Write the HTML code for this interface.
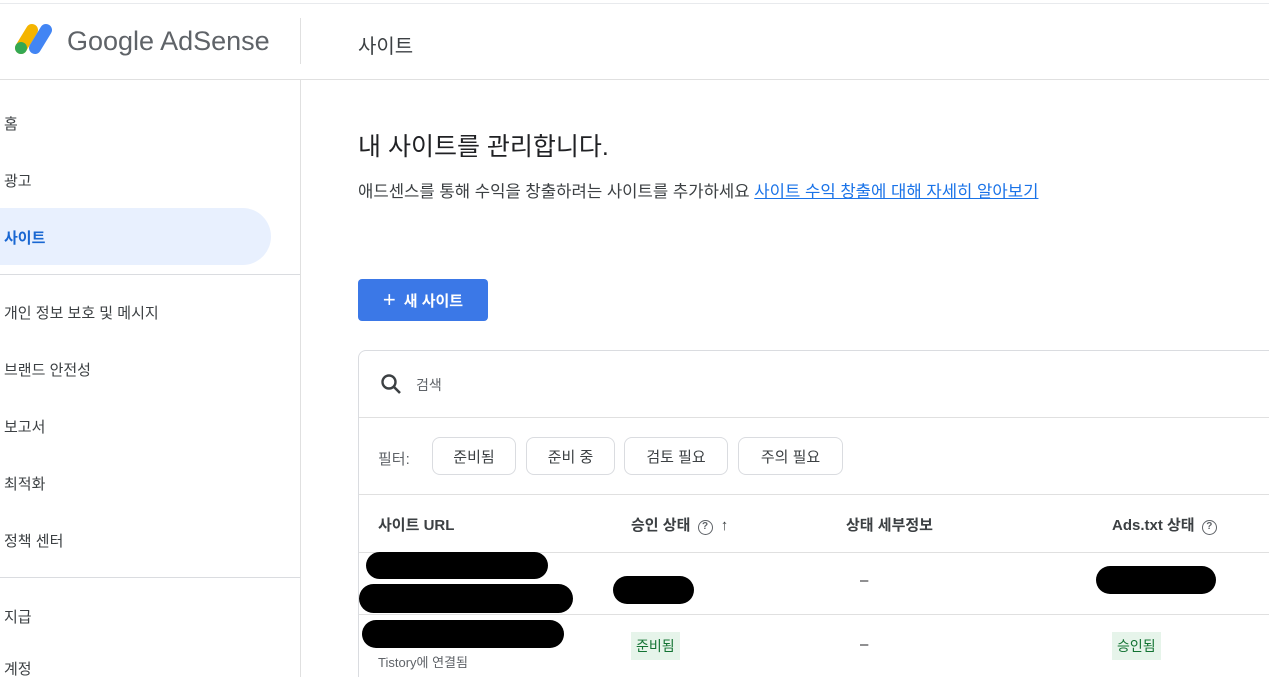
<!DOCTYPE html>
<html style="width:1269px;height:677px;overflow:hidden"><head><meta charset="utf-8"><style>
*{box-sizing:border-box;margin:0;padding:0}
body{width:1269px;height:677px;overflow:hidden;background:#fff;font-family:"Liberation Sans","Noto Sans CJK KR",sans-serif;color:#202124;position:relative}
.a{position:absolute;white-space:nowrap}
.nav{font-size:15px;color:#3c4043;left:4px}
.hl{left:0;top:208px;width:271px;height:57px;background:#e8f0fe;border-radius:0 29px 29px 0}
.chip{position:absolute;top:437px;height:38px;border:1px solid #dadce0;border-radius:8px;font-size:15px;color:#3c4043;display:flex;align-items:center;justify-content:center}
.th{font-size:15px;color:#3c4043;font-weight:bold;top:514px}
.blob{position:absolute;background:#000;border-radius:20px}
.tag{position:absolute;background:#e6f4ea;color:#137333;font-size:14px;padding:4px 5px}
.q{display:inline-block;width:15px;height:15px;border:1.5px solid #5f6368;border-radius:50%;font-size:10px;line-height:12px;text-align:center;font-weight:bold;color:#5f6368;vertical-align:1px;margin-left:3px}
</style></head><body>
<div class="a" style="left:0;top:3px;width:1269px;height:1px;background:#e8eaed"></div>
<svg class="a" style="left:12px;top:22px" width="42" height="34" viewBox="0 0 42 34">
<line x1="20" y1="8" x2="9" y2="26" stroke="#f4b400" stroke-width="12" stroke-linecap="round"/>
<line x1="34" y1="8" x2="23" y2="26" stroke="#4285f4" stroke-width="12" stroke-linecap="round"/>
<circle cx="9" cy="26" r="6" fill="#34a853"/></svg>
<div class="a" style="left:67px;top:26px;font-size:27px;color:#5f6368">Google AdSense</div>
<div class="a" style="left:300px;top:18px;width:1px;height:46px;background:#e0e0e0"></div>
<div class="a" style="left:358px;top:30px;font-size:20px;color:#3c4043">사이트</div>
<div class="a" style="left:0;top:79px;width:1269px;height:1px;background:#e0e0e0"></div>
<div class="a" style="left:300px;top:80px;width:1px;height:597px;background:#e0e0e0"></div>
<div class="a hl"></div>
<div class="a nav" style="top:113px">홈</div>
<div class="a nav" style="top:170px">광고</div>
<div class="a nav" style="top:227px;color:#1967d2;font-weight:bold">사이트</div>
<div class="a" style="left:0;top:274px;width:300px;height:1px;background:#dadce0"></div>
<div class="a nav" style="top:302px">개인 정보 보호 및 메시지</div>
<div class="a nav" style="top:359px">브랜드 안전성</div>
<div class="a nav" style="top:416px">보고서</div>
<div class="a nav" style="top:473px">최적화</div>
<div class="a nav" style="top:530px">정책 센터</div>
<div class="a" style="left:0;top:577px;width:300px;height:1px;background:#dadce0"></div>
<div class="a nav" style="top:606px">지급</div>
<div class="a nav" style="top:658px">계정</div>

<div class="a" style="left:358px;top:127px;font-size:25px;color:#202124">내 사이트를 관리합니다.</div>
<div class="a" style="left:358px;top:178px;font-size:16.7px;color:#3c4043">애드센스를 통해 수익을 창출하려는 사이트를 추가하세요 <span style="color:#1a73e8;text-decoration:underline">사이트 수익 창출에 대해 자세히 알아보기</span></div>
<div class="a" style="left:358px;top:279px;width:130px;height:42px;background:#3b78e7;border-radius:4px;color:#fff;font-size:15px;font-weight:bold;display:flex;align-items:center;justify-content:center"><span style="font-size:22px;font-weight:normal;margin-right:8px">+</span>새 사이트</div>

<div class="a" style="left:358px;top:350px;width:911px;height:327px;border:1px solid #dadce0;border-bottom:none;border-right:none;border-radius:8px 0 0 0"></div>
<svg class="a" style="left:380px;top:373px" width="22" height="22" viewBox="0 0 22 22"><circle cx="9" cy="9" r="6.5" fill="none" stroke="#3c4043" stroke-width="2.4"/><line x1="14" y1="14" x2="20" y2="20" stroke="#3c4043" stroke-width="2.6"/></svg>
<div class="a" style="left:416px;top:375px;font-size:14px;color:#5f6368">검색</div>
<div class="a" style="left:359px;top:417px;width:910px;height:1px;background:#e0e0e0"></div>
<div class="a" style="left:378px;top:448px;font-size:15px;color:#5f6368">필터:</div>
<div class="chip" style="left:432px;width:84px">준비됨</div>
<div class="chip" style="left:526px;width:89px">준비 중</div>
<div class="chip" style="left:624px;width:104px">검토 필요</div>
<div class="chip" style="left:738px;width:105px">주의 필요</div>
<div class="a" style="left:359px;top:494px;width:910px;height:1px;background:#e0e0e0"></div>
<div class="a th" style="left:378px">사이트 URL</div>
<div class="a th" style="left:631px">승인 상태 <span class="q">?</span> <span style="font-weight:normal;margin-left:4px">↑</span></div>
<div class="a th" style="left:846px">상태 세부정보</div>
<div class="a th" style="left:1112px">Ads.txt 상태 <span class="q">?</span></div>
<div class="a" style="left:359px;top:552px;width:910px;height:1px;background:#e0e0e0"></div>
<div class="blob" style="left:366px;top:552px;width:182px;height:27px"></div>
<div class="blob" style="left:359px;top:584px;width:214px;height:29px"></div>
<div class="blob" style="left:613px;top:576px;width:81px;height:28px"></div>
<div class="a" style="left:860px;top:572px;font-size:15px">–</div>
<div class="blob" style="left:1096px;top:566px;width:120px;height:28px"></div>
<div class="a" style="left:359px;top:614px;width:910px;height:1px;background:#e0e0e0"></div>
<div class="blob" style="left:362px;top:620px;width:202px;height:28px"></div>
<div class="a" style="left:378px;top:652px;font-size:13px;color:#5f6368">Tistory에 연결됨</div>
<div class="tag" style="left:631px;top:632px">준비됨</div>
<div class="a" style="left:860px;top:636px;font-size:15px">–</div>
<div class="tag" style="left:1112px;top:632px">승인됨</div>
</body></html>
